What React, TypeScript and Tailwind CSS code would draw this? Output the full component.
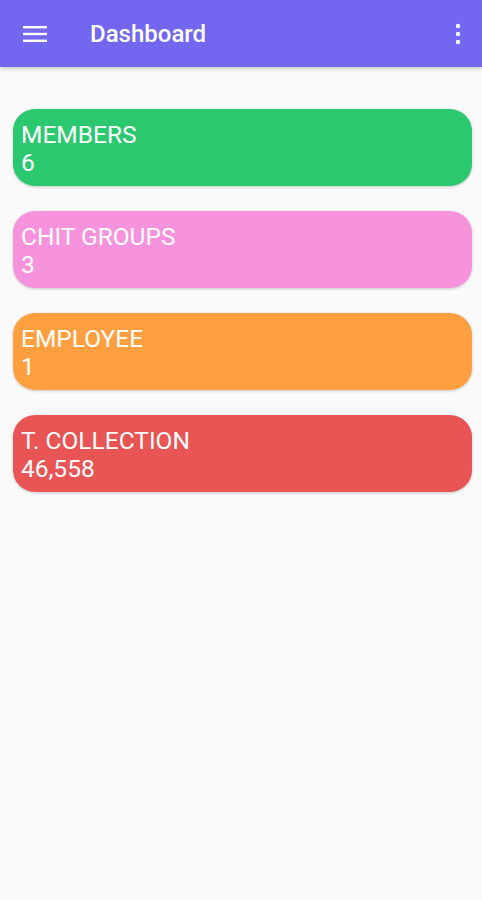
const stats = [
  { label: "MEMBERS", value: "6", color: "bg-[#2bc870]" },
  { label: "CHIT GROUPS", value: "3", color: "bg-[#f792dc]" },
  { label: "EMPLOYEE", value: "1", color: "bg-[#ff9f40]" },
  { label: "T. COLLECTION", value: "46,558", color: "bg-[#e95455]" },
];

const StatCard = ({ label, value, color }: { label: string; value: string; color: string }) => (
  <div className={`${color} h-[77px] rounded-[22px] px-2 pt-[12px] text-white shadow-[0_1px_3px_rgba(0,0,0,0.2)]`}>
    <p className="text-[24.5px] leading-[28px]">{label}</p>
    <p className="text-[24.5px] leading-[28px]">{value}</p>
  </div>
);

export default function App() {
  return (
    <div className="min-h-[900px] bg-[#fafafa]" style={{ fontFamily: "Roboto, 'Liberation Sans', sans-serif" }}>
      <header className="flex h-[67px] items-center bg-[#7367ef] px-[23px] text-white shadow-[0_2px_4px_rgba(0,0,0,0.2)]">
        <svg width="24" height="18" viewBox="0 0 24 18" className="fill-current">
          <rect x="0" y="1" width="24" height="2.4" />
          <rect x="0" y="7.8" width="24" height="2.4" />
          <rect x="0" y="14.6" width="24" height="2.4" />
        </svg>
        <h1 className="ml-[43px] flex-1 text-[24px] font-medium">Dashboard</h1>
        <svg width="6" height="22" viewBox="0 0 6 22" className="mr-[-2px] fill-current">
          <circle cx="3" cy="3" r="2.2" />
          <circle cx="3" cy="11" r="2.2" />
          <circle cx="3" cy="19" r="2.2" />
        </svg>
      </header>

      <main className="flex flex-col gap-[25px] px-[13px] pt-[42px] pr-[10px]">
        {stats.map((s) => (
          <StatCard key={s.label} {...s} />
        ))}
      </main>
    </div>
  );
}
